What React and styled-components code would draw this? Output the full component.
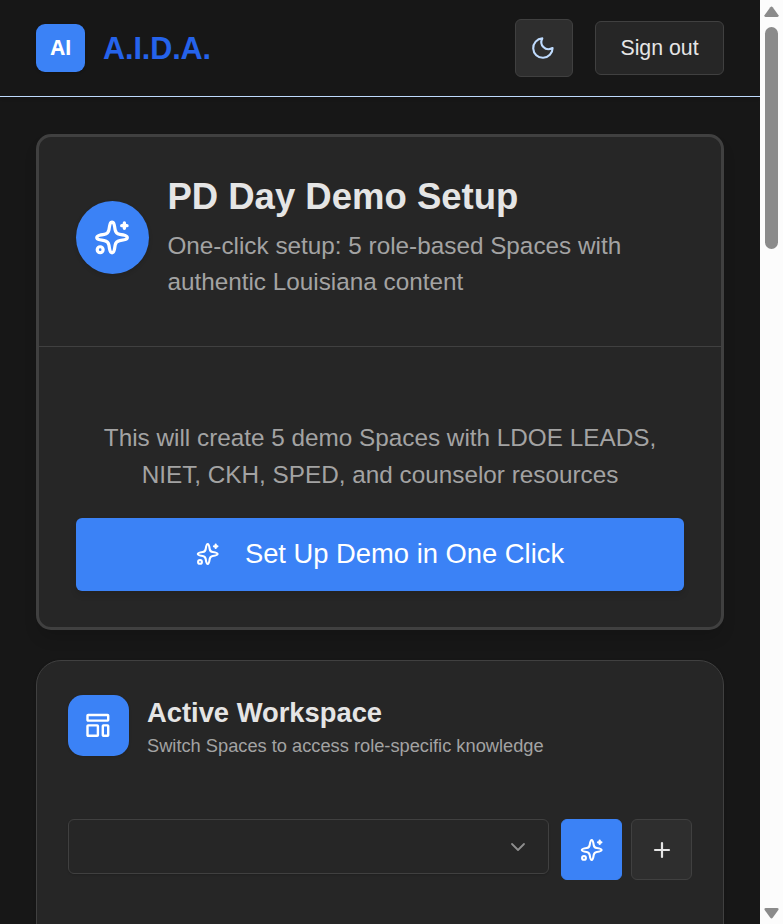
import React from 'react';
import styled, { createGlobalStyle } from 'styled-components';
import { Plus, ChevronDown } from 'lucide-react';

const GlobalStyle = createGlobalStyle`
  *, *::before, *::after { box-sizing: border-box; }
  html, body { margin: 0; height: 924px; overflow: hidden; background: #171717; }
  body { font-family: "Liberation Sans", Arial, sans-serif; color: #e5e5e5; }
  button { font-family: inherit; margin: 0; padding: 0; cursor: pointer; }
  h1, h2, p { margin: 0; }
  svg { display: block; flex-shrink: 0; overflow: visible; }
`;

const Window = styled.div`
  display: flex;
  width: 783px;
  height: 924px;
  overflow: hidden;
`;

const Page = styled.div`
  width: 760px;
  height: 924px;
  overflow: hidden;
  background: #171717;
`;

const Header = styled.header`
  display: flex;
  align-items: center;
  height: 97px;
  padding: 0 36px;
  border-bottom: 1px solid #bfdbfe;
  box-shadow: 0 1px 4px rgba(0, 0, 0, 0.1);
`;

const Logo = styled.div`
  display: flex;
  align-items: center;
  justify-content: center;
  width: 49px;
  height: 48px;
  padding: 0 0 2px 1px;
  border-radius: 9px;
  background: #3b82f6;
  color: #fff;
  font: 700 20.8px/28px "Open Sans", sans-serif;
  box-shadow: 0 1px 3px rgba(0, 0, 0, 0.2);
`;

const Brand = styled.div`
  margin-left: 18px;
  font-size: 30.6px;
  line-height: 36px;
  letter-spacing: -0.1px;
  font-weight: 700;
  color: #2563eb;
`;

const HeaderActions = styled.div`
  display: flex;
  align-items: center;
  gap: 22.5px;
  margin-left: auto;
`;

const ThemeButton = styled.button`
  display: flex;
  align-items: center;
  justify-content: center;
  width: 58px;
  height: 58px;
  padding-right: 1px;
  border: 1px solid #404040;
  border-radius: 6px;
  background: #2e2e2e;
  color: #bfdbfe;
`;

const SignOut = styled.button`
  width: 129px;
  height: 54px;
  border: 1px solid #404040;
  border-radius: 6px;
  background: #262626;
  color: #e5e5e5;
  font-size: 21.3px;
`;

const Content = styled.main`
  display: flex;
  flex-direction: column;
  gap: 30px;
  padding: 37px 36px 0;
`;

const SetupCard = styled.section`
  height: 496px;
  border: 3px solid #404040;
  border-radius: 15px;
  background: #262626;
  box-shadow: 0 10px 15px -3px rgba(0, 0, 0, 0.15);
`;

const SetupHeader = styled.div`
  display: flex;
  gap: 18.4px;
  height: 210px;
  padding: 37px 37px 0;
  border-bottom: 1px solid #404040;
`;

const RoundIcon = styled.div`
  display: flex;
  align-items: center;
  justify-content: center;
  flex-shrink: 0;
  width: 73px;
  height: 73px;
  margin-top: 27px;
  border-radius: 50%;
  background: #3b82f6;
  color: #fff;
  box-shadow: 0 2px 4px rgba(0, 0, 0, 0.12);
`;

const SetupTitle = styled.h1`
  font-size: 36.5px;
  line-height: 46px;
  font-weight: 700;
  white-space: nowrap;
`;

const SetupText = styled.p`
  margin-top: 8px;
  font-size: 24.3px;
  line-height: 36px;
  color: #a3a3a3;
  white-space: nowrap;
`;

const SetupBody = styled.div`
  padding: 73px 37px 0;
`;

const Description = styled.p`
  font-size: 24.3px;
  line-height: 36.5px;
  color: #a3a3a3;
  text-align: center;
  white-space: nowrap;
`;

const SetupButton = styled.button`
  display: flex;
  align-items: center;
  justify-content: center;
  gap: 25px;
  width: 100%;
  height: 73px;
  margin-top: 25px;
  padding-bottom: 2px;
  border: 0;
  border-radius: 6px;
  background: #3b82f6;
  color: #fff;
  font-size: 27.35px;
  box-shadow: 0 4px 6px rgba(0, 0, 0, 0.12);
`;

const WorkspaceCard = styled.section`
  height: 320px;
  padding: 34px 31px;
  border: 1px solid #404040;
  border-radius: 25px;
  background: #262626;
  box-shadow: 0 1px 3px rgba(0, 0, 0, 0.2);
`;

const WorkspaceHeader = styled.div`
  display: flex;
  gap: 18px;
  height: 61px;
`;

const SquareIcon = styled.div`
  display: flex;
  align-items: center;
  justify-content: center;
  width: 61px;
  height: 61px;
  padding-right: 1px;
  border-radius: 15px;
  background: #3b82f6;
  color: #fff;
  box-shadow: 0 1px 3px rgba(0, 0, 0, 0.12);
`;

const WorkspaceTitle = styled.h2`
  font-size: 27.35px;
  line-height: 36px;
  font-weight: 700;
  white-space: nowrap;
`;

const WorkspaceText = styled.p`
  margin-top: 1px;
  font-size: 18.25px;
  line-height: 27px;
  color: #a3a3a3;
  white-space: nowrap;
`;

const Controls = styled.div`
  display: flex;
  align-items: flex-start;
  margin-top: 63px;
`;

const Select = styled.button`
  display: flex;
  align-items: center;
  justify-content: flex-end;
  width: 481px;
  height: 55px;
  padding-right: 18px;
  border: 1px solid #404040;
  border-radius: 6px;
  background: #262626;
  color: #8e8e8e;
  box-shadow: 0 1px 2px rgba(0, 0, 0, 0.15);
`;

const IconButton = styled.button`
  display: flex;
  align-items: center;
  justify-content: center;
  width: 61px;
  height: 61px;
  margin-left: ${(p) => (p.$primary ? 12 : 9)}px;
  border: 1px solid ${(p) => (p.$primary ? '#3b82f6' : '#404040')};
  border-radius: 6px;
  background: ${(p) => (p.$primary ? '#3b82f6' : '#2e2e2e')};
  color: ${(p) => (p.$primary ? '#fff' : '#e5e5e5')};
`;

const ScrollTrack = styled.div`
  display: flex;
  flex-direction: column;
  align-items: center;
  width: 23px;
  height: 924px;
  padding-top: 6px;
  background: #fcfcfc;
`;

const ScrollThumb = styled.div`
  width: 13px;
  height: 222px;
  margin: 9px 0 658px;
  border-radius: 7px;
  background: #8b8b8b;
`;

function ScrollArrow({ down }) {
  return (
    <svg width="15" height="12" viewBox="0 0 15 12" fill="#8b8b8b">
      <path
        transform={down ? 'rotate(180 7.5 6)' : undefined}
        d="M6.3 1.3Q7.5-.1 8.7 1.3L14.5 9.2Q15 11 13.4 11H1.6Q0 11 .5 9.2Z"
      />
    </svg>
  );
}

function SparkleIcon({ size = 24 }) {
  return (
    <svg width={size} height={size} viewBox="0 0 24 24" fill="none" stroke="currentColor" strokeWidth="2.1" strokeLinejoin="round" strokeLinecap="round">
      <path d="M11.7 2.1C13 2.1 13.3 4.2 13.7 7C14 9 14.7 9.7 16.7 10C19.5 10.4 21.6 10.7 21.6 12C21.6 13.3 19.5 13.6 16.7 14C14.7 14.3 14 15 13.7 17C13.3 19.8 13 21.9 11.7 21.9C10.4 21.9 10.1 19.8 9.7 17C9.4 15 8.7 14.3 6.7 14C3.9 13.6 1.8 13.3 1.8 12C1.8 10.7 3.9 10.4 6.7 10C8.7 9.7 9.4 9 9.7 7C10.1 4.2 10.4 2.1 11.7 2.1Z" />
      <path d="M19.7 2.6V6M18 4.3H21.4" strokeWidth="2.2" />
      <circle cx="4" cy="19.9" r="1.9" />
    </svg>
  );
}

function MoonIcon() {
  return (
    <svg width="24" height="24" viewBox="0 0 24 24" fill="none" stroke="currentColor" strokeWidth="2.1" strokeLinejoin="round">
      <path d="M11.3 2.4C9.8 5.2 10.1 8.6 12.4 11C14.8 13.5 18.3 13.8 21.6 12A9.7 9.7 0 1 1 11.3 2.4Z" />
    </svg>
  );
}

function TemplateIcon() {
  return (
    <svg width="24" height="24" viewBox="0 0 24 24" fill="none" stroke="currentColor" strokeWidth="2.4" strokeLinejoin="round">
      <rect x="1.5" y="1" width="20.7" height="5.6" rx=".6" />
      <rect x="1.5" y="11.4" width="10.4" height="10.4" rx=".6" />
      <rect x="16.8" y="11.4" width="5.4" height="10.4" rx=".6" />
    </svg>
  );
}

export default function App() {
  return (
    <>
      <GlobalStyle />
      <Window>
        <Page>
          <Header>
            <Logo>AI</Logo>
            <Brand>A.I.D.A.</Brand>
            <HeaderActions>
              <ThemeButton aria-label="Toggle theme"><MoonIcon /></ThemeButton>
              <SignOut>Sign out</SignOut>
            </HeaderActions>
          </Header>
          <Content>
            <SetupCard>
              <SetupHeader>
                <RoundIcon><SparkleIcon size={37} /></RoundIcon>
                <div>
                  <SetupTitle>PD Day Demo Setup</SetupTitle>
                  <SetupText>One-click setup: 5 role-based Spaces with<br />authentic Louisiana content</SetupText>
                </div>
              </SetupHeader>
              <SetupBody>
                <Description>This will create 5 demo Spaces with LDOE LEADS,<br />NIET, CKH, SPED, and counselor resources</Description>
                <SetupButton><SparkleIcon />Set Up Demo in One Click</SetupButton>
              </SetupBody>
            </SetupCard>
            <WorkspaceCard>
              <WorkspaceHeader>
                <SquareIcon><TemplateIcon /></SquareIcon>
                <div>
                  <WorkspaceTitle>Active Workspace</WorkspaceTitle>
                  <WorkspaceText>Switch Spaces to access role-specific knowledge</WorkspaceText>
                </div>
              </WorkspaceHeader>
              <Controls>
                <Select aria-label="Workspace"><ChevronDown size={24} strokeWidth={1.8} /></Select>
                <IconButton $primary aria-label="Set up demo"><SparkleIcon /></IconButton>
                <IconButton aria-label="Add workspace"><Plus size={24} strokeWidth={2.2} /></IconButton>
              </Controls>
            </WorkspaceCard>
          </Content>
        </Page>
        <ScrollTrack>
          <ScrollArrow />
          <ScrollThumb />
          <ScrollArrow down />
        </ScrollTrack>
      </Window>
    </>
  );
}
